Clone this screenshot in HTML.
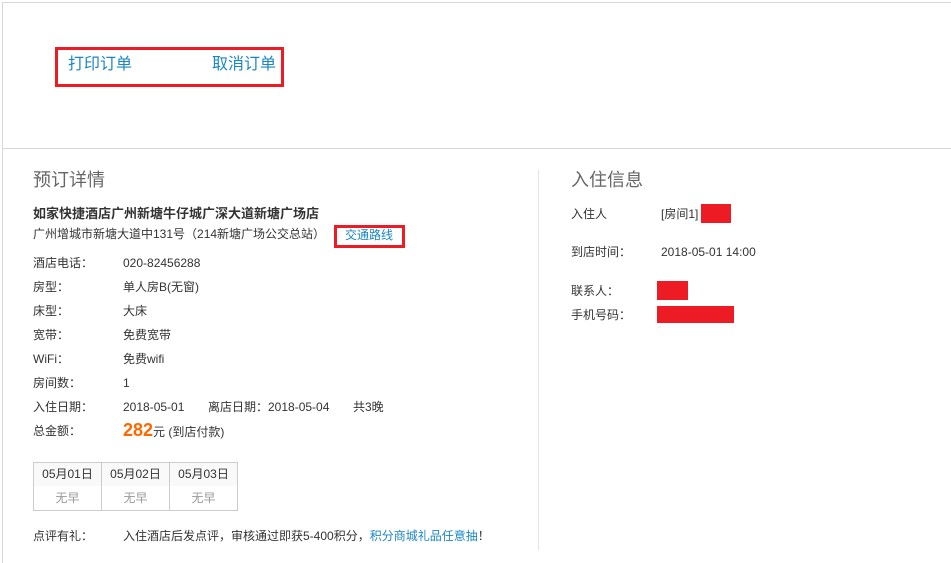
<!DOCTYPE html>
<html><head><meta charset="utf-8"><style>
*{margin:0;padding:0;box-sizing:border-box}
body{width:951px;height:563px;background:#fff;font-family:"Liberation Sans","Noto Sans CJK SC",sans-serif;color:#333;position:relative;overflow:hidden}
.a{position:absolute;white-space:nowrap;line-height:1}
.s12{font-size:12px}
.red{position:absolute;background:#ed1c24}
</style></head><body>
<div style="position:absolute;left:2px;top:2px;width:949px;height:1px;background:#d8d8d8"></div>
<div style="position:absolute;left:2px;top:2px;width:1px;height:561px;background:#d8d8d8"></div>
<div style="position:absolute;left:2px;top:148px;width:949px;height:1px;background:#d8d8d8"></div>
<div style="position:absolute;left:538px;top:170px;width:1px;height:380px;background:#e4e4e4"></div>

<div style="position:absolute;left:55px;top:47px;width:229px;height:40px;border:3px solid #ed1c24"></div>
<div class="a" style="left:68px;top:57px;font-size:16px;color:#1a86c4">打印订单</div>
<div class="a" style="left:212px;top:57px;font-size:16px;color:#1a86c4">取消订单</div>

<div class="a" style="left:33px;top:171px;font-size:18px;color:#666">预订详情</div>
<div class="a" style="left:33px;top:207px;font-size:13px;font-weight:bold;color:#333">如家快捷酒店广州新塘牛仔城广深大道新塘广场店</div>
<div class="a s12" style="left:33px;top:228px">广州增城市新塘大道中131号（214新塘广场公交总站）</div>
<div style="position:absolute;left:334px;top:225px;width:71px;height:23px;border:3px solid #ed1c24"></div>
<div class="a s12" style="left:345px;top:229px;color:#1a86c4">交通路线</div>

<div class="a s12" style="left:33px;top:257px">酒店电话：</div><div class="a s12" style="left:123px;top:257px">020-82456288</div>
<div class="a s12" style="left:33px;top:281px">房型：</div><div class="a s12" style="left:123px;top:281px">单人房B(无窗)</div>
<div class="a s12" style="left:33px;top:305px">床型：</div><div class="a s12" style="left:123px;top:305px">大床</div>
<div class="a s12" style="left:33px;top:329px">宽带：</div><div class="a s12" style="left:123px;top:329px">免费宽带</div>
<div class="a s12" style="left:33px;top:353px">WiFi：</div><div class="a s12" style="left:123px;top:353px">免费wifi</div>
<div class="a s12" style="left:33px;top:377px">房间数：</div><div class="a s12" style="left:123px;top:377px">1</div>
<div class="a s12" style="left:33px;top:401px">入住日期：</div><div class="a s12" style="left:123px;top:401px">2018-05-01</div>
<div class="a s12" style="left:208px;top:401px">离店日期：2018-05-04</div>
<div class="a s12" style="left:353px;top:401px">共3晚</div>
<div class="a s12" style="left:33px;top:425px">总金额：</div>
<div class="a" style="left:123px;top:421px;font-size:18px;font-weight:bold;color:#ff6600">282<span style="font-size:12px;font-weight:normal;color:#333">元 (到店付款)</span></div>

<div style="position:absolute;left:33px;top:462px;width:205px;height:49px;border:1px solid #ccc;display:flex">
<div style="width:68px;border-right:1px solid #ccc"><div style="height:23px;background:#f9f9f9;font-size:12px;text-align:center;line-height:23px;color:#333">05月01日</div><div style="font-size:12px;text-align:center;line-height:24px;color:#999">无早</div></div>
<div style="width:68px;border-right:1px solid #ccc"><div style="height:23px;background:#f9f9f9;font-size:12px;text-align:center;line-height:23px;color:#333">05月02日</div><div style="font-size:12px;text-align:center;line-height:24px;color:#999">无早</div></div>
<div style="width:67px"><div style="height:23px;background:#f9f9f9;font-size:12px;text-align:center;line-height:23px;color:#333">05月03日</div><div style="font-size:12px;text-align:center;line-height:24px;color:#999">无早</div></div>
</div>

<div class="a s12" style="left:33px;top:530px">点评有礼：</div>
<div class="a s12" style="left:123px;top:530px">入住酒店后发点评，审核通过即获5-400积分，<span style="color:#1a86c4">积分商城礼品任意抽</span>！</div>

<div class="a" style="left:571px;top:171px;font-size:18px;color:#666">入住信息</div>
<div class="a s12" style="left:571px;top:208px">入住人</div>
<div class="a s12" style="left:661px;top:208px">[房间1]</div>
<div class="red" style="left:701px;top:204px;width:30px;height:19px"></div>
<div class="a s12" style="left:571px;top:246px">到店时间：</div>
<div class="a s12" style="left:661px;top:246px">2018-05-01 14:00</div>
<div class="a s12" style="left:571px;top:285px">联系人：</div>
<div class="red" style="left:657px;top:281px;width:31px;height:19px"></div>
<div class="a s12" style="left:571px;top:309px">手机号码：</div>
<div class="red" style="left:657px;top:306px;width:77px;height:17px"></div>
</body></html>
